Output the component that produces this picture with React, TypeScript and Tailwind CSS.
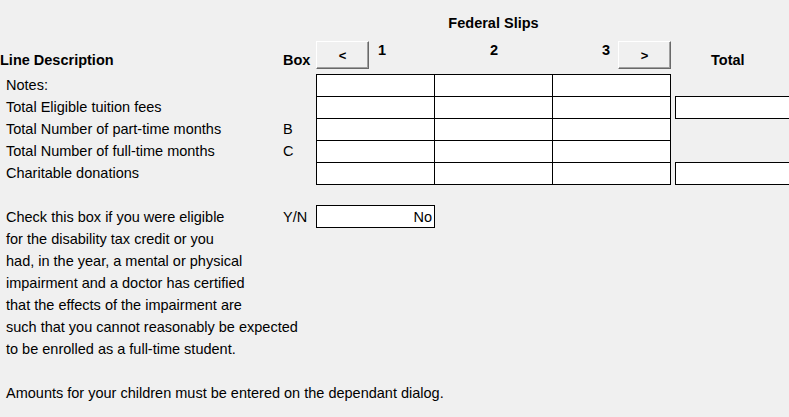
import React from "react";

type Row = { label: string; box?: string; total?: boolean };

const rows: Row[] = [
    { label: "Notes:" },
    { label: "Total Eligible tuition fees", total: true },
    { label: "Total Number of part-time months", box: "B" },
    { label: "Total Number of full-time months", box: "C" },
    { label: "Charitable donations", total: true },
];

const disabilityText = [
    "Check this box if you were eligible",
    "for the disability tax credit or you",
    "had, in the year, a mental or physical",
    "impairment and a doctor has certified",
    "that the effects of the impairment are",
    "such that you cannot reasonably be expected",
    "to be enrolled as a full-time student.",
];

function NavButton({ label }: { label: string }) {
    return (
        <button className="shrink-0 w-[53px] h-[28px] bg-[#f0f0f0] border border-t-white border-l-white border-r-[#696969] border-b-[#696969] shadow-[inset_-1px_-1px_0_#a0a0a0] flex items-center justify-center font-bold text-[13px] leading-none text-black">
            {label}
        </button>
    );
}

export default function App() {
    return (
        <div
            className="w-[789px] h-[417px] overflow-hidden bg-[#f0f0f0] text-black text-[14.5px] leading-[22px]"
            style={{ fontFamily: '"Liberation Sans", Arial, sans-serif' }}
        >
            {/* 标题 */}
            <div className="flex h-[41px]">
                <div className="w-[316px] shrink-0" />
                <div className="w-[355px] shrink-0 pt-[15px] text-center font-bold leading-[16px]">Federal Slips</div>
            </div>

            {/* 列头 */}
            <div className="flex h-[33px] font-bold">
                <div className="w-[283px] shrink-0 pt-[11px] leading-[16px]">Line Description</div>
                <div className="w-[33px] shrink-0 pt-[11px] leading-[16px]">Box</div>
                <div className="w-[355px] shrink-0 flex items-start">
                    <NavButton label="<" />
                    <div className="ml-[9px] pt-[1px] leading-[16px]">1</div>
                    <div className="flex-1 text-center pt-[1px] leading-[16px]">2</div>
                    <div className="mr-[8px] pt-[1px] leading-[16px]">3</div>
                    <NavButton label=">" />
                </div>
                <div className="pl-[40px] pt-[11px] leading-[16px] whitespace-nowrap">Total</div>
            </div>

            {/* 明细行 */}
            <div className="flex flex-col">
                {rows.map((row, i) => {
                    const last = i === rows.length - 1;
                    const h = last ? "h-[23px] border-b" : "h-[22px]";
                    return (
                        <div key={row.label} className="flex h-[22px] items-start">
                            <div className="w-[283px] shrink-0 pl-[6px] h-[22px] flex items-center whitespace-nowrap">{row.label}</div>
                            <div className="w-[33px] shrink-0 h-[22px] flex items-center">{row.box}</div>
                            <div className={`w-[118px] shrink-0 bg-white border-l border-t border-black ${h}`} />
                            <div className={`w-[118px] shrink-0 bg-white border-l border-t border-black ${h}`} />
                            <div className={`w-[119px] shrink-0 bg-white border-l border-t border-r border-black ${h}`} />
                            {row.total && <div className="shrink-0 ml-[4px] w-[130px] h-[23px] bg-white border border-black" />}
                        </div>
                    );
                })}
            </div>

            {/* 残疾说明 */}
            <div className="flex mt-[22px]">
                <div className="w-[283px] shrink-0 pl-[6px]">
                    {disabilityText.map((line) => (
                        <div key={line} className="h-[22px] flex items-center whitespace-nowrap">{line}</div>
                    ))}
                </div>
                <div className="w-[33px] shrink-0 h-[22px] flex items-center">Y/N</div>
                <div className="w-[119px] shrink-0 h-[23px] -mt-[1px] bg-white border border-black flex items-center justify-end pr-[2px]">No</div>
            </div>

            <div className="mt-[22px] pl-[6px] h-[22px] flex items-center whitespace-nowrap">
                Amounts for your children must be entered on the dependant dialog.
            </div>
        </div>
    );
}
